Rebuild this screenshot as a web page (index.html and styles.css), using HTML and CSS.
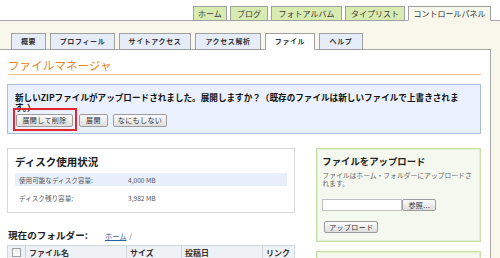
FILE: index.html
```html
<!DOCTYPE html>
<html lang="ja">
<head>
<meta charset="utf-8">
<title>ファイルマネージャ</title>
<link rel="stylesheet" href="styles.css">
</head>
<body>
<div class="topnav">
  <a class="toptab w34">ホーム</a>
  <a class="toptab w38">ブログ</a>
  <a class="toptab w71">フォトアルバム</a>
  <a class="toptab w60">タイプリスト</a>
  <a class="toptab active w83">コントロールパネル</a>
</div>
<div class="wrap">
  <div class="subtabs">
    <a class="subtab w35">概要</a>
    <a class="subtab w65">プロフィール</a>
    <a class="subtab w72">サイトアクセス</a>
    <a class="subtab w66">アクセス解析</a>
    <a class="subtab active w50">ファイル</a>
    <a class="subtab w44">ヘルプ</a>
  </div>
  <div class="panel">
    <h1 class="title">ファイルマネージャ</h1>
    <div class="notice">
      <p class="notice-text">新しいZIPファイルがアップロードされました。展開しますか？（既存のファイルは新しいファイルで上書きされま<span class="nowrap">す。）</span></p>
      <div class="notice-actions">
        <span class="hl-wrap"><button class="btn w57">展開して削除</button><span class="hl"></span></span>
        <button class="btn w29">展開</button>
        <button class="btn w54">なにもしない</button>
      </div>
    </div>
    <div class="cols">
      <div class="col-main">
        <div class="disk">
          <h2 class="disk-title">ディスク使用状況</h2>
          <div class="disk-row shaded"><span class="disk-label">使用可能なディスク容量:</span><span>4,000 MB</span></div>
          <div class="disk-row"><span class="disk-label">ディスク残り容量:</span><span>3,982 MB</span></div>
        </div>
        <div class="folder"><span class="folder-label">現在のフォルダー:</span><a class="folder-link">ホーム</a><span class="slash">/</span></div>
        <div class="thead">
          <div class="th th-check"><span class="checkbox"></span></div>
          <div class="th th-name">ファイル名</div>
          <div class="th th-size">サイズ</div>
          <div class="th th-date">投稿日</div>
          <div class="th th-link">リンク</div>
        </div>
      </div>
      <div class="col-side">
        <div class="upload">
          <h3 class="upload-title">ファイルをアップロード</h3>
          <p class="upload-desc">ファイルはホーム・フォルダーにアップロードされます。</p>
          <div class="file-row"><span class="file-input"></span><button class="btn browse">参照...</button></div>
          <button class="btn upbtn">アップロード</button>
        </div>
        <div class="upload next"></div>
      </div>
    </div>
  </div>
</div>
</body>
</html>
```
FILE: styles.css
```css
* { box-sizing: border-box; }
body {
  margin: 0;
  background: #f7f7ec;
  font-family: "Noto Sans CJK JP", sans-serif;
  color: #222;
  overflow: hidden;
}
.topnav {
  height: 21px;
  background: #fff;
  border-bottom: 1px solid #a8a8a8;
  display: flex;
  justify-content: flex-end;
  align-items: flex-end;
  gap: 3px;
  padding-right: 9px;
}
.toptab {
  height: 15px;
  margin-bottom: -1px;
  border: 1px solid #a0a0a0;
  background: #d8ebb0;
  font-size: 8px;
  line-height: 13px;
  text-align: center;
  color: #3a3a3a;
}
.toptab.active { background: #f7f7ec; border-bottom-color: #f7f7ec; color: #333; }
.w34 { width: 34px; } .w38 { width: 38px; } .w71 { width: 71px; }
.w60 { width: 60px; } .w83 { width: 83px; }
.wrap { width: 491px; }
.subtabs {
  height: 29px;
  border-bottom: 1px solid #a8a8a8;
  display: flex;
  align-items: flex-end;
  gap: 4px;
  padding-left: 11px;
}
.subtab {
  height: 17px;
  margin-bottom: -1px;
  border: 1px solid #a0a0a0;
  background: #e6edf9;
  font-size: 7px;
  font-weight: bold;
  letter-spacing: 0.6px;
  line-height: 15px;
  text-align: center;
  color: #333;
}
.subtab.active { background: #fff; border-bottom-color: #fff; }
.w35 { width: 35px; } .w65 { width: 65px; } .w72 { width: 72px; }
.w66 { width: 66px; } .w50 { width: 50px; } .w44 { width: 44px; }
.panel {
  background: #fff;
  border-right: 1px solid #a8a8a8;
  padding: 8px 9px 0 7px;
  height: 208px;
  overflow: hidden;
}
.title {
  margin: 0 0 0 1px;
  font-size: 11.5px;
  font-weight: normal;
  color: #e8821e;
  letter-spacing: 0.1px;
  line-height: 15px;
  border-bottom: 1px solid #f2c08e;
  padding-bottom: 1px;
}
.notice {
  margin-top: 9px;
  background: #ebf1fc;
  border: 1px solid #a9bedc;
  padding: 7px 19px 5px 7px;
  height: 50px;
}
.notice-text {
  margin: 0;
  font-size: 8.6px;
  font-weight: bold;
  line-height: 10px;
  color: #111;
}
.nowrap { white-space: nowrap; }
.notice-actions {
  display: flex;
  margin-top: 2px;
  padding-left: 1px;
}
.btn {
  height: 13px;
  padding: 0;
  border: 1px solid #9c9c9c;
  border-radius: 2px;
  background: linear-gradient(#fbfbfb, #dedede);
  font-family: "Noto Sans CJK JP", sans-serif;
  font-size: 7px;
  letter-spacing: 0.4px;
  line-height: 11px;
  color: #333;
}
.w57 { width: 57px; } .w29 { width: 29px; margin-left: 6px; } .w54 { width: 54px; margin-left: 5px; }
.hl-wrap { position: relative; display: flex; }
.hl {
  position: absolute;
  left: -3px; top: -6px; right: -4px; bottom: -4px;
  border: 2px solid #e3262d;
}
.cols {
  display: flex;
  margin-top: 14px;
  gap: 21px;
}
.col-main { width: 289px; }
.col-side { width: 165px; }
.disk {
  border: 1px solid #d6d6d6;
  padding: 6px 7px 7px 7px;
  height: 65px;
}
.disk-title {
  margin: 0 0 4px 0;
  font-size: 10.5px;
  font-weight: bold;
  line-height: 14px;
  color: #222;
}
.disk-row {
  height: 13px;
  display: flex;
  align-items: center;
  padding-left: 4px;
  font-size: 6.6px;
  color: #555;
}
.disk-row + .disk-row { margin-top: 5px; }
.disk-row.shaded { background: #e9effa; }
.disk-label { width: 109px; }
.folder {
  margin-top: 15px;
  display: flex;
  align-items: baseline;
  padding-left: 1px;
  height: 14px;
}
.folder-label { font-size: 9.6px; font-weight: bold; width: 97px; color: #222; }
.folder-link { font-size: 7.2px; color: #3060a8; text-decoration: underline; }
.slash { font-size: 7px; color: #555; margin-left: 3px; }
.thead {
  margin-top: 3px;
  display: flex;
  height: 15px;
  border: 1px solid #d0d6de;
  background: #eef1f6;
}
.th {
  font-size: 8px;
  font-weight: bold;
  line-height: 13px;
  color: #333;
  padding-left: 3px;
  border-right: 1px solid #d0d6de;
}
.th-check { width: 18px; display: flex; align-items: center; padding-left: 4px; }
.checkbox { width: 9px; height: 9px; border: 1px solid #a0a0a0; background: linear-gradient(#eee, #fff); }
.th-name { width: 101px; }
.th-size { width: 55px; }
.th-date { width: 81px; }
.th-link { border-right: none; flex: 1; }
.upload {
  border: 1px solid #c8e1a8;
  box-shadow: inset 0 0 0 1px #e3efd2;
  background: #f5f8ef;
  padding: 6px 5px 0 5px;
  height: 94px;
}
.upload.next { margin-top: 9px; height: 20px; }
.upload-title {
  margin: 0;
  font-size: 9.4px;
  font-weight: bold;
  line-height: 13px;
  color: #222;
}
.upload-desc {
  margin: 3px 0 0 0;
  font-size: 6.8px;
  line-height: 8px;
  color: #666;
}
.file-row { display: flex; margin-top: 12px; }
.file-input { width: 80px; height: 12px; background: #fff; border: 1px solid #c0c0c0; }
.browse { width: 34px; height: 12px; }
.upbtn { width: 54px; height: 12px; margin-top: 9px; margin-left: 2px; }
```
